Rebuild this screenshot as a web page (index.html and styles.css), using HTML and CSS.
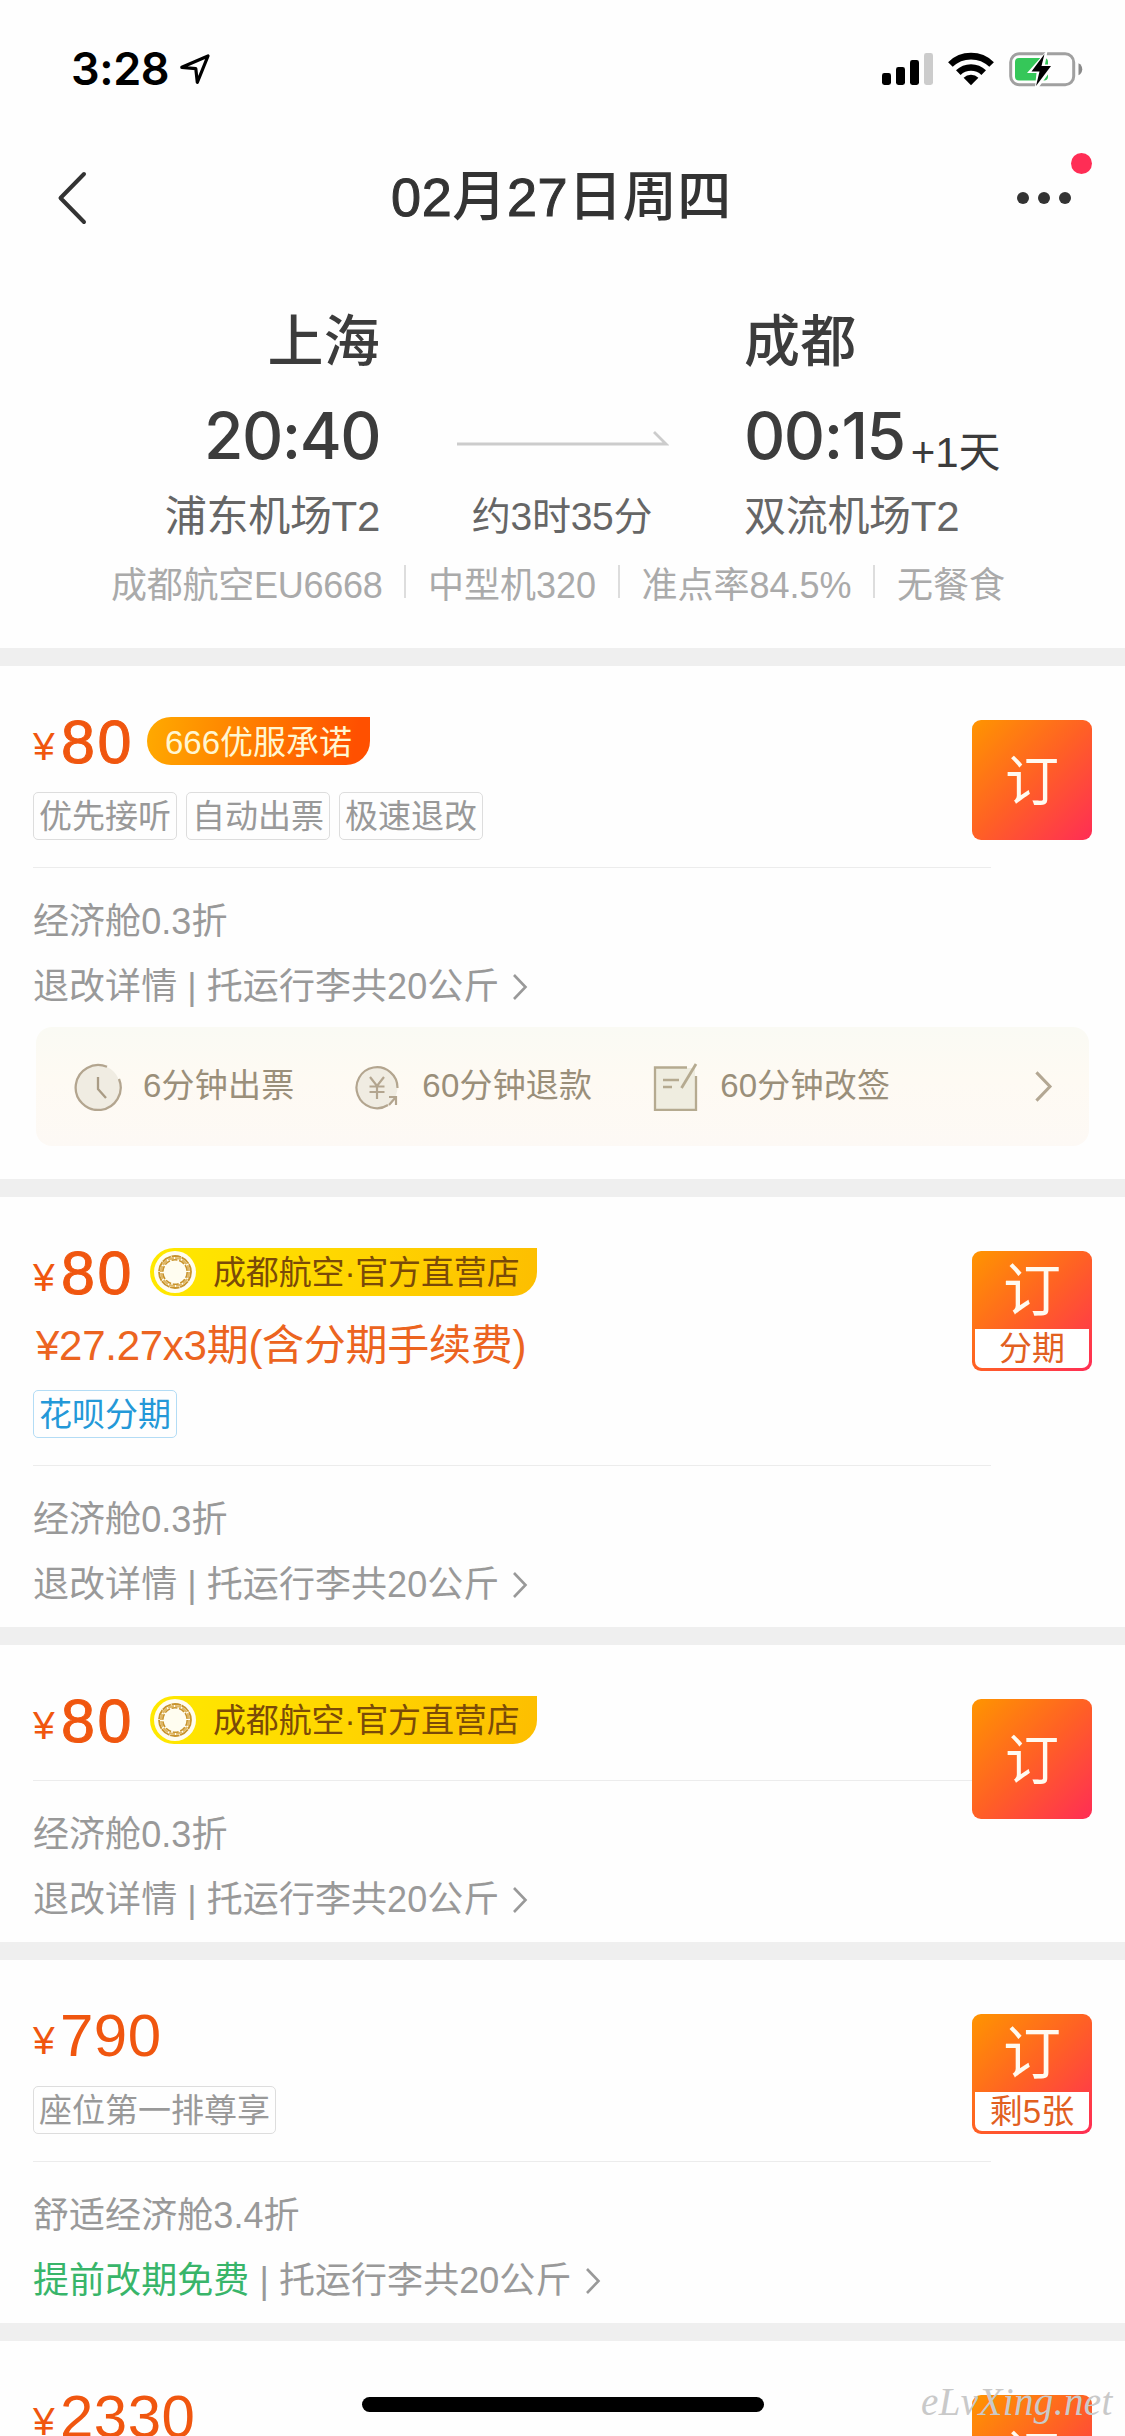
FILE: index.html
```
<!DOCTYPE html>
<html lang="zh-CN">
<head>
<meta charset="utf-8">
<title>02月27日周四</title>
<link rel="stylesheet" href="styles.css">
</head>
<body>
<svg class="defs" aria-hidden="true">
  <symbol id="chevron" viewBox="0 0 16 28"><path d="M2 2 13.5 14 2 26" fill="none" stroke="currentColor" stroke-width="2.6"/></symbol>
  <symbol id="airline" viewBox="0 0 42 42">
    <circle cx="21" cy="21" r="21" fill="#fffdf0"/>
    <g fill="none" stroke="#c8932c">
      <circle cx="21" cy="21" r="16" stroke-width="1.8" stroke-dasharray="9.5 .7"/>
      <circle cx="21" cy="21" r="14" stroke-width="2.2" stroke="#dfb765" stroke-dasharray="6 1.3"/>
      <circle cx="21" cy="21" r="12.2" stroke-width="1.6" stroke-dasharray="6 1.66"/>
    </g>
  </symbol>
</svg>
<div class="screen">
  <header>
    <div class="status">
      <div class="clock">3:28
        <svg width="32" height="32" viewBox="0 0 32 32"><path d="M2.8 14.3 29 3 18.3 29.3 16.8 15.6Z" fill="none" stroke="#000" stroke-width="3.2" stroke-linejoin="round"/></svg>
      </div>
      <div class="indicators">
        <svg width="51" height="34" viewBox="0 0 51 34"><rect x="0" y="21" width="9" height="12" rx="2.4"/><rect x="14" y="15" width="9" height="18" rx="2.4"/><rect x="28" y="8" width="9" height="25" rx="2.4"/><rect x="42" y="1" width="9" height="32" rx="2.4" fill="#ccc"/></svg>
        <svg width="46" height="34" viewBox="0 0 46 34"><g fill="none" stroke="#000" stroke-width="6.6"><path d="M2.4 12.5a29.5 29.5 0 0 1 41.2 0"/><path d="M10.3 20.6a18.3 18.3 0 0 1 25.4 0"/></g><path d="M23 33.2 15.6 25.8a10.6 10.6 0 0 1 14.8 0Z"/></svg>
        <svg width="74" height="36" viewBox="0 0 74 36"><rect x="1.7" y="2.7" width="63" height="31" rx="8.5" fill="none" stroke="#a0a0a0" stroke-width="3"/><path d="M69.5 12.2c5 2.3 5 9.7 0 12Z" fill="#8a8a8a"/><rect x="6" y="7" width="33" height="22.5" rx="4" fill="#35c759"/><path d="M37.5 0 18 22h9.500L26 36h4L46 13.500H36L38.500 0Z" fill="#fff"/><path d="M35.500 3 22.500 20.500h8L27 35 42 15H32.500Z"/></svg>
      </div>
    </div>
    <div class="nav">
      <svg class="back" width="32" height="56" viewBox="0 0 32 56"><path d="M28 4 4.500 28 28 52" fill="none" stroke="#333" stroke-width="4" stroke-linecap="round" stroke-linejoin="round"/></svg>
      <h1><b>02</b>月<b>27</b>日周四</h1>
      <div class="more"><i></i><i></i><i></i><b class="dot"></b></div>
    </div>
    <div class="route">
      <div class="city from">上海</div><div></div><div class="city">成都</div>
      <div class="time from">20:40</div>
      <svg class="arrow" width="212" height="18" viewBox="0 0 212 18"><path d="M0 15H209L197 3" fill="none" stroke="#ccc" stroke-width="2.800"/></svg>
      <div class="time">00:15<span class="plus">+1天</span></div>
      <div class="port from">浦东机场T2</div><div class="port mid">约3时35分</div><div class="port">双流机场T2</div>
    </div>
    <div class="info"><span class="flight">成都航空EU6668</span><i></i><span>中型机320</span><i></i><span>准点率84.5%</span><i></i><span>无餐食</span></div>
  </header>

  <section class="card">
    <div class="main">
      <div class="price"><span class="yen">¥</span><span class="num strong">80</span><span class="badge">666优服承诺</span></div>
      <div class="tags"><span class="tag">优先接听</span><span class="tag">自动出票</span><span class="tag">极速退改</span></div>
      <div class="detail"><p>经济舱0.3折</p><p>退改详情 | 托运行李共20公斤<svg class="go"><use href="#chevron"/></svg></p></div>
      <div class="promise">
        <div class="item">
          <svg width="48" height="48" viewBox="0 0 48 48"><circle cx="24" cy="24" r="22" fill="#f0ece2"/><path d="M33 3.800A22.500 22.500 0 1 0 45 16" fill="none" stroke="#b3a58f" stroke-width="2.300"/><path d="M24 14v12l8 9" fill="none" stroke="#a99b84" stroke-width="2.300"/></svg>
          <span>6分钟出票</span>
        </div>
        <div class="item">
          <svg width="48" height="48" viewBox="0 0 48 48"><circle cx="24" cy="24.500" r="20.500" fill="#f0ece2"/><g fill="none" stroke="#b3a58f" stroke-width="2.200"><path d="M35 42A20.500 20.500 0 1 1 44.500 25"/><path d="m17 14 7 9 7-9M16.500 23.500h15M16.500 29h15M24 23v13"/><path d="M36 34h7v8M42.500 34.500 36 42"/></g></svg>
          <span>60分钟退款</span>
        </div>
        <div class="item">
          <svg width="48" height="48" viewBox="0 0 48 48"><path d="M4 5h40v42H4Z" fill="#efede0"/><path d="M36 4.500H4v42.500h41V13" fill="none" stroke="#b5aa90" stroke-width="2.300"/><path d="M12 17h16M12 24h9" stroke="#b5aa90" stroke-width="2.300"/><path d="M45 1 30.500 25" stroke="#b5aa90" stroke-width="2.800"/></svg>
          <span>60分钟改签</span>
        </div>
        <svg class="more-go"><use href="#chevron"/></svg>
      </div>
    </div>
    <div class="book"><span>订</span></div>
  </section>

  <section class="card">
    <div class="main">
      <div class="price"><span class="yen">¥</span><span class="num strong">80</span><span class="badge store"><svg><use href="#airline"/></svg>成都航空·官方直营店</span></div>
      <div class="instal">¥27.27x3期(含分期手续费)</div>
      <div class="tags after"><span class="tag blue">花呗分期</span></div>
      <div class="detail"><p>经济舱0.3折</p><p>退改详情 | 托运行李共20公斤<svg class="go"><use href="#chevron"/></svg></p></div>
    </div>
    <div class="book split"><span>订</span><em>分期</em></div>
  </section>

  <section class="card">
    <div class="main">
      <div class="price"><span class="yen">¥</span><span class="num strong">80</span><span class="badge store"><svg><use href="#airline"/></svg>成都航空·官方直营店</span></div>
      <div class="detail bare"><p>经济舱0.3折</p><p>退改详情 | 托运行李共20公斤<svg class="go"><use href="#chevron"/></svg></p></div>
    </div>
    <div class="book"><span>订</span></div>
  </section>

  <section class="card">
    <div class="main">
      <div class="price"><span class="yen">¥</span><span class="num">790</span></div>
      <div class="tags"><span class="tag">座位第一排尊享</span></div>
      <div class="detail"><p>舒适经济舱3.4折</p><p><span class="free">提前改期免费</span> | 托运行李共20公斤<svg class="go"><use href="#chevron"/></svg></p></div>
    </div>
    <div class="book split"><span>订</span><em>剩5张</em></div>
  </section>

  <section class="card">
    <div class="main"><div class="price"><span class="yen">¥</span><span class="num">2330</span></div></div>
    <div class="book"><span>订</span></div>
  </section>

  <div class="home"></div>
  <div class="mark">eLvXing.net</div>
</div>
</body>
</html>
```
FILE: styles.css
```
* { box-sizing: border-box; margin: 0; padding: 0; }
html, body { background: #fff; }
body { font-family: "Liberation Sans", "Noto Sans CJK SC", sans-serif; color: #3c3c3c; }
i, em { font-style: normal; }
svg { display: block; flex: none; }
.defs { position: absolute; width: 0; height: 0; }
.screen { position: relative; width: 1125px; height: 2436px; overflow: hidden; background: #fefefe; }

header { height: 648px; }
.status { height: 132px; padding: 51px 42px 0 71px; display: flex; justify-content: space-between; align-items: flex-start; }
.clock { display: flex; align-items: center; gap: 10px; height: 36px; font: 600 45px/36px Inter, sans-serif; color: #000; letter-spacing: -.4px; }
.indicators { display: flex; align-items: center; gap: 15px; height: 36px; }

.nav { height: 132px; padding: 0 48px 0 56px; display: flex; align-items: center; justify-content: space-between; }
.nav h1 { font-size: 54px; font-weight: 500; line-height: 80px; color: #333; margin: -2px 0 0 18px; letter-spacing: .6px; }
.nav h1 b { font-weight: 400; -webkit-text-stroke: 1px #333; }
.more { position: relative; display: flex; gap: 9px; padding-right: 6px; }
.more i { width: 12px; height: 12px; border-radius: 50%; background: #333; }
.dot { position: absolute; left: 54px; top: -39px; width: 21px; height: 21px; border-radius: 50%; background: #ff2d55; }

.route { display: grid; grid-template-columns: 380px 364px 1fr; grid-template-rows: 82px 107px 53px; padding-top: 37px; align-items: center; white-space: nowrap; }
.from { text-align: right; }
.city { font-size: 56px; font-weight: 500; line-height: 82px; letter-spacing: .3px; }
.time { font: 500 64px/105px Inter, sans-serif; letter-spacing: -1.5px; padding-bottom: 2px; }
.plus { font: 400 42px/1 "Liberation Sans", "Noto Sans CJK SC", sans-serif; letter-spacing: 0; vertical-align: -8px; margin-left: 6px; }
.arrow { justify-self: center; margin: 3px 0 0 2px; }
.port { font-size: 42px; line-height: 53px; color: #666; letter-spacing: -.3px; }
.mid { font-size: 39px; text-align: center; }
.info { height: 78px; padding: 0 120px 0 111px; display: flex; align-items: center; justify-content: space-between; font-size: 36px; color: #aaa; white-space: nowrap; }
.info i { width: 2px; height: 33px; background: #ddd; margin-bottom: 2px; }
.flight { letter-spacing: -.25px; }

.card { display: grid; grid-template-columns: 1fr 120px; border-top: 18px solid #efefef; padding: 51px 33px 0; }
.main { grid-area: 1 / 1 / 2 / 3; min-width: 0; }
.price { height: 48px; display: flex; color: #f0560f; white-space: nowrap; }
.yen { width: 27px; font-size: 39px; line-height: 59px; }
.num { font-size: 60px; line-height: 50px; letter-spacing: .5px; }
.num.strong { font-size: 61px; width: 85px; margin-left: 1px; letter-spacing: 2.5px; -webkit-text-stroke: 1px #f0560f; }
.badge { margin-left: 1px; height: 48px; padding: 0 18px; border-radius: 24px 0 24px 24px; background: linear-gradient(100deg, #ffaa00, #ff5000 92%); color: #fff7d2; font-size: 33px; line-height: 51px; }
.store { margin-left: 4px; width: 387px; padding: 0 0 0 4px; display: flex; align-items: center; gap: 17px; background: linear-gradient(100deg, #ffe900, #ffd400 55%, #fdbe00); color: #7a4a08; letter-spacing: -.15px; }
.store svg { width: 42px; height: 42px; }
.instal { height: 94px; padding-left: 3px; font-size: 42px; line-height: 99px; color: #ec6420; letter-spacing: -.27px; white-space: nowrap; }
.tags { display: flex; gap: 9px; margin-top: 27px; }
.tags.after { margin-top: 0; }
.tag { height: 48px; padding: 0 5px; border: 1.500px solid #ddd; border-radius: 5px; font-size: 33px; line-height: 48px; color: #999; }
.blue { border-color: #b3dcf5; color: #2398d8; }
.detail { margin-top: 27px; padding: 21px 0 10px; font-size: 36px; line-height: 65px; color: #999; border-top: 1px solid #ececec; width: 958px; white-space: nowrap; }
.detail.bare { margin-top: 36px; }
.detail p { display: flex; align-items: center; white-space: pre; letter-spacing: .06px; }
.go { width: 16px; height: 28px; margin: 0 0 0 13px; }
.free { color: #38b56a; }

.promise { margin: -2px 3px 33px; height: 119px; padding: 0 36px 0 38px; border-radius: 16px; display: flex; align-items: center; gap: 59px; background: linear-gradient(#fafaf4, #fefaf3 45%, #fdf9f5); font-size: 33px; color: #9a8f7a; white-space: nowrap; }
.item { display: flex; align-items: center; gap: 21px; }
.item span { line-height: 40px; padding-bottom: 2px; letter-spacing: .2px; }
.more-go { width: 19px; height: 33px; margin-left: auto; color: #b3a793; }

.book { grid-area: 1 / 2; position: relative; margin-top: 3px; width: 120px; height: 120px; border-radius: 9px; background: linear-gradient(135deg, #ff9500, #ff6025 50%, #ff2d55); color: #fffaf0; font-size: 54px; line-height: 124px; text-align: center; display: flex; flex-direction: column; align-items: center; }
.split { font-size: 58px; line-height: 80px; padding: 0 3px 3px; }
.split span { height: 78px; }
.split em { width: 114px; height: 39px; border-radius: 0 0 7px 7px; background: #fff; color: #e2601f; font-size: 33px; line-height: 40px; }

.home { position: absolute; left: 362px; top: 2397px; width: 402px; height: 15px; border-radius: 8px; background: #000; }
.mark { position: absolute; left: 921px; top: 2379px; font: italic 39px/46px "Liberation Serif", serif; color: #c9c9c9; letter-spacing: .4px; }
```
